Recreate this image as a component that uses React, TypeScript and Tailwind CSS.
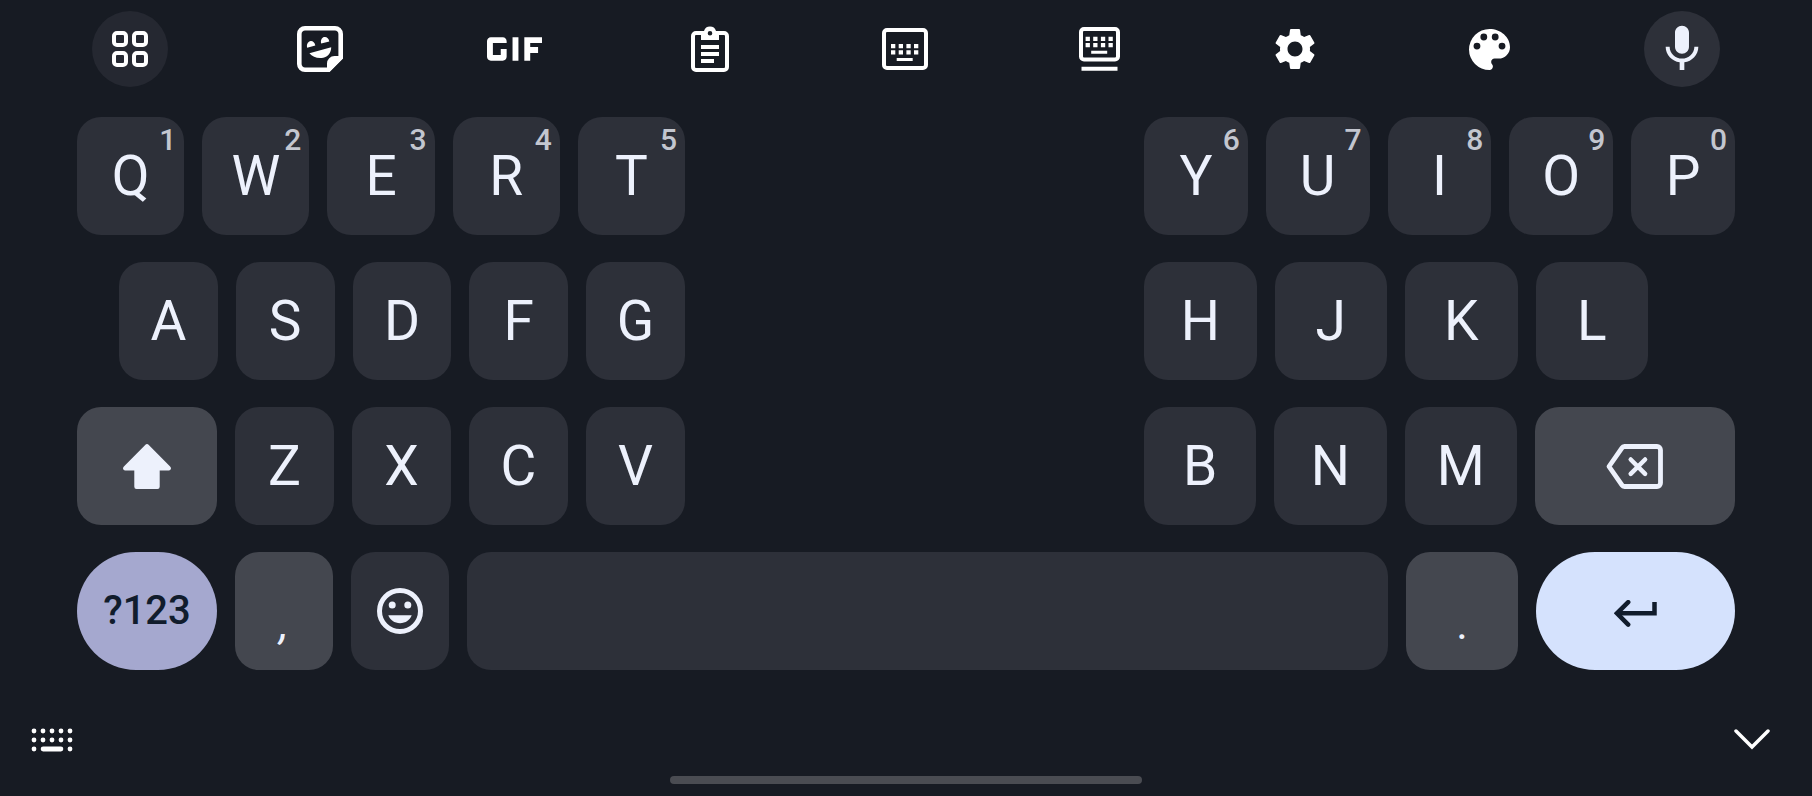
import type { ReactNode } from 'react';
import { MdGif, MdMic, MdSettings } from 'react-icons/md';

type LetterKey = { label: string; hint?: string };

const topLeft: LetterKey[] = [
  { label: 'Q', hint: '1' },
  { label: 'W', hint: '2' },
  { label: 'E', hint: '3' },
  { label: 'R', hint: '4' },
  { label: 'T', hint: '5' },
];

const topRight: LetterKey[] = [
  { label: 'Y', hint: '6' },
  { label: 'U', hint: '7' },
  { label: 'I', hint: '8' },
  { label: 'O', hint: '9' },
  { label: 'P', hint: '0' },
];

const homeLeft: LetterKey[] = [{ label: 'A' }, { label: 'S' }, { label: 'D' }, { label: 'F' }, { label: 'G' }];
const homeRight: LetterKey[] = [{ label: 'H' }, { label: 'J' }, { label: 'K' }, { label: 'L' }];
const bottomLeft: LetterKey[] = [{ label: 'Z' }, { label: 'X' }, { label: 'C' }, { label: 'V' }];
const bottomRight: LetterKey[] = [{ label: 'B' }, { label: 'N' }, { label: 'M' }];

function AppsIcon() {
  return (
    <svg viewBox="0 0 36 36" className="w-9 h-9" fill="none" stroke="currentColor" strokeWidth="4">
      <rect x="2" y="2" width="12" height="12" rx="3" />
      <rect x="22" y="2" width="12" height="12" rx="3" />
      <rect x="2" y="22" width="12" height="12" rx="3" />
      <rect x="22" y="22" width="12" height="12" rx="3" />
    </svg>
  );
}

function StickerIcon() {
  return (
    <svg viewBox="0 0 46 46" className="w-[46px] h-[46px]" fill="currentColor">
      <path
        d="M8 2.3h30a5.7 5.7 0 0 1 5.7 5.7v23.6L31.6 43.7H8A5.7 5.7 0 0 1 2.3 38V8A5.7 5.7 0 0 1 8 2.3z"
        fill="none"
        stroke="currentColor"
        strokeWidth="4.6"
      />
      <path d="M30 46v-8.5a7.5 7.5 0 0 1 7.5-7.5H46v2.3L32.3 46z" />
      <path d="M10.2 21.7c-.9-3 .4-5.8 2.9-6.5 2.3-.6 4.6 1.1 5.2 4.3z" />
      <path d="M24.2 17.6c-.9-3 .4-5.8 2.9-6.5 2.3-.6 4.6 1.1 5.2 4.3z" />
      <path d="M12.4 27.3 34.2 21.2c0 5.3-3.2 9.6-8 10.6-5.200 1.100-10.800-.7-13.800-4.500z" />
    </svg>
  );
}

function ClipboardIcon() {
  return (
    <svg viewBox="0 0 38 46" className="w-[38px] h-[46px]" fill="currentColor">
      <path
        d="M11 7H5a3 3 0 0 0-3 3v31a3 3 0 0 0 3 3h28a3 3 0 0 0 3-3V10a3 3 0 0 0-3-3h-6"
        fill="none"
        stroke="currentColor"
        strokeWidth="4"
      />
      <path fillRule="evenodd" d="M10 14V5h3a6.3 6.3 0 0 1 12 0h3v9zM19 4.900a2.300 2.300 0 1 0 0 4.600 2.300 2.300 0 0 0 0-4.600z" />
      <path d="M10 19h18v4H10zM10 26h18v4H10zM10 33h13v4H10z" />
    </svg>
  );
}

function KeyboardCardIcon() {
  return (
    <svg viewBox="0 0 46 42" className="w-[46px] h-[42px]" fill="currentColor">
      <rect x="2" y="2" width="42" height="38" rx="3" fill="none" stroke="currentColor" strokeWidth="4" />
      <path d="M9 16h4.3v4.3H9zM16.7 16H21v4.3h-4.3zM24.4 16h4.3v4.3h-4.3zM32 16h4.3v4.3H32z" />
      <path d="M9 22.2h4.3v4.3H9zM16.7 22.2H21v4.3h-4.3zM24.4 22.2h4.3v4.3h-4.3zM32 22.2h4.3v4.3H32z" />
      <path d="M14.700 30h16v3h-16z" />
    </svg>
  );
}

function KeyboardDockIcon() {
  return (
    <svg viewBox="0 0 41 44" className="w-[41px] h-11" fill="currentColor">
      <rect x="2" y="2" width="37" height="30.5" rx="3" fill="none" stroke="currentColor" strokeWidth="4" />
      <path d="M6.6 9.8h4.3v4.3H6.6zM14.2 9.8h4.3v4.3h-4.3zM21.9 9.8h4.3v4.3h-4.3zM29.5 9.8h4.3v4.3h-4.3z" />
      <path d="M6.6 16h4.3v4.3H6.6zM14.2 16h4.3v4.3h-4.3zM21.9 16h4.3v4.3h-4.3zM29.5 16h4.3v4.3h-4.3z" />
      <path d="M12.2 23.700h16v3h-16zM2.500 39.700h36v4h-36z" />
    </svg>
  );
}

function PaletteIcon() {
  return (
    <svg viewBox="3 3 18 18" className="w-[41px] h-[41px]" fill="currentColor">
      <path d="M12 3a9 9 0 0 0 0 18c.83 0 1.5-.67 1.5-1.5 0-.39-.15-.74-.39-1.01-.23-.26-.38-.61-.38-.99 0-.83.67-1.5 1.5-1.5H16c2.76 0 5-2.24 5-5 0-4.42-4.03-8-9-8zM6.500 12a1.500 1.500 0 1 1 0-3 1.500 1.500 0 0 1 0 3zM9.500 8a1.500 1.500 0 1 1 0-3 1.500 1.500 0 0 1 0 3zM14.500 8a1.500 1.500 0 1 1 0-3 1.500 1.500 0 0 1 0 3zM17.500 12a1.500 1.500 0 1 1 0-3 1.500 1.500 0 0 1 0 3z" />
    </svg>
  );
}

function ShiftIcon() {
  return (
    <svg viewBox="0 0 48 45" className="w-12 h-[45px]" fill="currentColor">
      <path d="M22.7.6a1.9 1.9 0 0 1 2.6 0l21.8 21.8c1.7 1.7.8 4-1.3 4h-9.100v16.400a2.200 2.200 0 0 1-2.200 2.200h-21a2.200 2.200 0 0 1-2.200-2.200V26.400H2.200c-2.100 0-3-2.300-1.300-4z" />
    </svg>
  );
}

function BackspaceIcon() {
  return (
    <svg
      viewBox="0 0 57 45"
      className="w-[57px] h-[45px]"
      fill="none"
      stroke="currentColor"
      strokeWidth="4.8"
      strokeLinejoin="round"
      strokeLinecap="round"
    >
      <path d="M18.5 2.500H51a3.500 3.500 0 0 1 3.500 3.500v33a3.500 3.500 0 0 1-3.500 3.500H18.500a3 3 0 0 1-2.500-1.400L3 22.500 16 3.900a3 3 0 0 1 2.500-1.400z" />
      <path d="M24.700 15.500l14.400 14.400M39.100 15.500L24.700 29.900" strokeWidth="4.500" />
    </svg>
  );
}

function EnterIcon() {
  return (
    <svg viewBox="0 0 43 27" className="w-[43px] h-[27px]" fill="none" stroke="currentColor" strokeWidth="4.5">
      <path d="M40.500 2v11.300H3.500" />
      <path d="M14.200 2.200L3 13.300l11.200 11.300" strokeLinecap="round" />
    </svg>
  );
}

function EmojiIcon() {
  return (
    <svg viewBox="0 0 46 46" className="w-[46px] h-[46px]" fill="currentColor">
      <circle cx="23" cy="23" r="20.5" fill="none" stroke="currentColor" strokeWidth="5" />
      <circle cx="15.2" cy="17" r="3.5" />
      <circle cx="30.8" cy="17" r="3.5" />
      <path d="M11.3 27.300h23.400C33 32 28.500 35.200 23 35.200S13 32 11.300 27.300z" />
    </svg>
  );
}

function SwitchKeyboardIcon() {
  return (
    <svg viewBox="0 0 42 24" className="w-[42px] h-6" fill="currentColor">
      {[3, 12].map((y) => [3, 12, 21, 30, 39].map((x) => <circle key={`${x}-${y}`} cx={x} cy={y} r="2.4" />))}
      <circle cx="3" cy="21" r="2.4" />
      <circle cx="39" cy="21" r="2.4" />
      <rect x="9.7" y="18.6" width="22.6" height="4.8" rx="2.4" />
    </svg>
  );
}

function ChevronIcon() {
  return (
    <svg
      viewBox="0 0 36 22"
      className="w-9 h-[22px]"
      fill="none"
      stroke="currentColor"
      strokeWidth="3.5"
      strokeLinecap="round"
    >
      <path d="M2 2l16 16L34 2" />
    </svg>
  );
}

const tools: { label: string; icon: ReactNode }[] = [
  { label: 'Stickers', icon: <StickerIcon /> },
  { label: 'GIFs', icon: <MdGif viewBox="5 9 14 6" className="w-[55px] h-6" /> },
  { label: 'Clipboard', icon: <ClipboardIcon /> },
  { label: 'Floating keyboard', icon: <KeyboardCardIcon /> },
  { label: 'Resize keyboard', icon: <KeyboardDockIcon /> },
  { label: 'Settings', icon: <MdSettings className="w-[50px] h-[50px]" /> },
  { label: 'Themes', icon: <PaletteIcon /> },
];

function Letters({ keys }: { keys: LetterKey[] }) {
  return keys.map((key) => (
    <button
      key={key.label}
      type="button"
      className="relative flex flex-1 items-center justify-center h-full rounded-3xl bg-[#2d3039] text-[55px] leading-none"
    >
      {key.label}
      {key.hint && (
        <span className="absolute top-2 right-2 text-[30px] leading-none font-medium text-[#c3c6cf]">{key.hint}</span>
      )}
    </button>
  ));
}

function Row({ children }: { children: ReactNode }) {
  return <div className="grid grid-cols-[608fr_459fr_591fr] h-[118px]">{children}</div>;
}

export default function App() {
  return (
    <main className="flex flex-col min-h-screen bg-[#171b23] text-[#edf1fc] font-['Roboto',sans-serif]">
      <div className="flex items-center px-[92px] pt-[11px] text-white">
        <button
          type="button"
          aria-label="More tools"
          className="flex items-center justify-center shrink-0 w-19 h-19 rounded-full bg-[#252831]"
        >
          <AppsIcon />
        </button>
        <div className="grid grid-cols-7 flex-1 ml-[54px] mr-[57px]">
          {tools.map((tool) => (
            <button
              key={tool.label}
              type="button"
              aria-label={tool.label}
              className="flex items-center justify-center h-19"
            >
              {tool.icon}
            </button>
          ))}
        </div>
        <button
          type="button"
          aria-label="Voice input"
          className="flex items-center justify-center shrink-0 w-19 h-19 rounded-full bg-[#2d3039] text-[#edf1fc]"
        >
          <MdMic className="w-14 h-14" />
        </button>
      </div>

      <div className="flex flex-col gap-[27px] px-[77px] pt-[30px]">
        <Row>
          <div className="flex gap-[18px]">
            <Letters keys={topLeft} />
          </div>
          <div className="col-start-3 flex gap-[18px]">
            <Letters keys={topRight} />
          </div>
        </Row>

        <Row>
          <div className="flex gap-[18px] pl-[42px]">
            <Letters keys={homeLeft} />
          </div>
          <div className="col-start-3 flex gap-[18px] pr-[87px]">
            <Letters keys={homeRight} />
          </div>
        </Row>

        <Row>
          <div className="flex gap-[18px]">
            <button
              type="button"
              aria-label="Shift"
              className="flex items-center justify-center w-[140px] rounded-3xl bg-[#44474f]"
            >
              <ShiftIcon />
            </button>
            <Letters keys={bottomLeft} />
          </div>
          <div className="col-start-3 flex gap-[18px]">
            <Letters keys={bottomRight} />
            <button
              type="button"
              aria-label="Backspace"
              className="flex items-center justify-center w-[200px] rounded-3xl bg-[#44474f]"
            >
              <BackspaceIcon />
            </button>
          </div>
        </Row>

        <div className="flex gap-[18px] h-[118px]">
          <button
            type="button"
            className="w-[140px] rounded-full bg-[#a5a8cf] text-[40px] leading-none font-medium text-[#111c2c]"
          >
            ?123
          </button>
          <button
            type="button"
            className="flex items-end justify-center w-[98px] pb-6 rounded-3xl bg-[#44474f] text-[44px] leading-none italic"
          >
            ,
          </button>
          <button
            type="button"
            aria-label="Emoji"
            className="flex items-center justify-center w-[98px] rounded-3xl bg-[#2d3039]"
          >
            <EmojiIcon />
          </button>
          <button type="button" aria-label="Space" className="flex-1 rounded-3xl bg-[#2d3039]" />
          <button
            type="button"
            className="flex items-end justify-center w-28 pb-6 rounded-3xl bg-[#44474f] text-[44px] leading-none"
          >
            .
          </button>
          <button
            type="button"
            aria-label="Enter"
            className="flex items-center justify-center w-[199px] pt-1 rounded-full bg-[#d5e2fd] text-[#111c2c]"
          >
            <EnterIcon />
          </button>
        </div>
      </div>

      <div className="flex items-center justify-between pl-[31px] pr-[42px] pt-[58px] text-white">
        <button type="button" aria-label="Switch keyboard">
          <SwitchKeyboardIcon />
        </button>
        <button type="button" aria-label="Hide keyboard">
          <ChevronIcon />
        </button>
      </div>
      <div className="w-[26%] h-2 mx-auto mt-6 rounded-full bg-[#4a4c52]" />
    </main>
  );
}
